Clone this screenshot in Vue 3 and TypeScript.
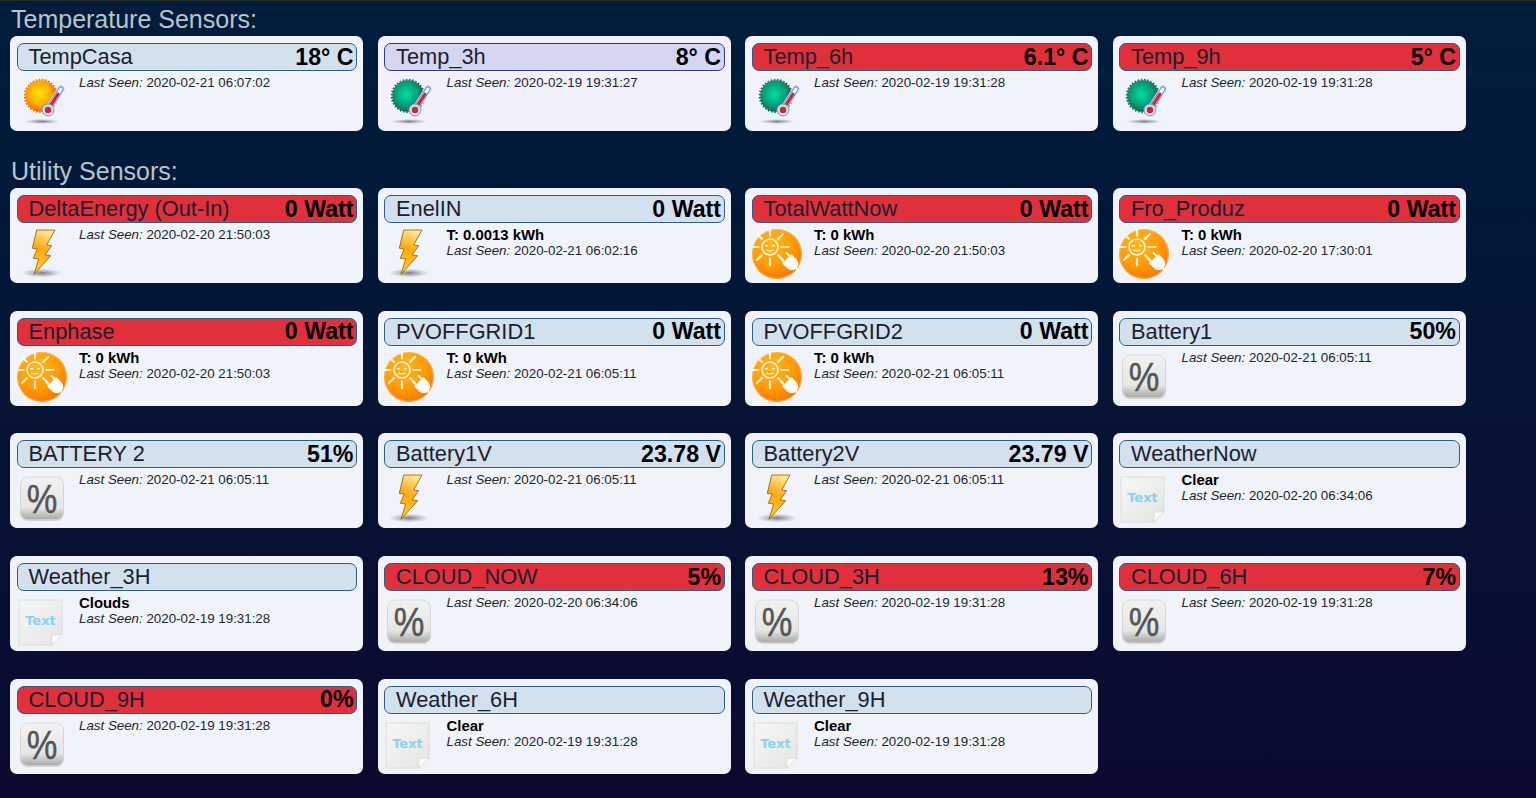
<script setup lang="ts">
type Icon = 'sun' | 'green' | 'bolt' | 'solar' | 'pct' | 'text'
type State = 'ok' | 'old' | 'off'
interface Sensor { name: string; value?: string; seen: string; state: State; icon: Icon; extra?: string }

const temperature: Sensor[] = [
  { name: 'TempCasa', value: '18° C', seen: '2020-02-21 06:07:02', state: 'ok', icon: 'sun' },
  { name: 'Temp_3h', value: '8° C', seen: '2020-02-19 19:31:27', state: 'old', icon: 'green' },
  { name: 'Temp_6h', value: '6.1° C', seen: '2020-02-19 19:31:28', state: 'off', icon: 'green' },
  { name: 'Temp_9h', value: '5° C', seen: '2020-02-19 19:31:28', state: 'off', icon: 'green' },
]
const utility: Sensor[] = [
  { name: 'DeltaEnergy (Out-In)', value: '0 Watt', seen: '2020-02-20 21:50:03', state: 'off', icon: 'bolt' },
  { name: 'EnelIN', value: '0 Watt', extra: 'T: 0.0013 kWh', seen: '2020-02-21 06:02:16', state: 'ok', icon: 'bolt' },
  { name: 'TotalWattNow', value: '0 Watt', extra: 'T: 0 kWh', seen: '2020-02-20 21:50:03', state: 'off', icon: 'solar' },
  { name: 'Fro_Produz', value: '0 Watt', extra: 'T: 0 kWh', seen: '2020-02-20 17:30:01', state: 'off', icon: 'solar' },
  { name: 'Enphase', value: '0 Watt', extra: 'T: 0 kWh', seen: '2020-02-20 21:50:03', state: 'off', icon: 'solar' },
  { name: 'PVOFFGRID1', value: '0 Watt', extra: 'T: 0 kWh', seen: '2020-02-21 06:05:11', state: 'ok', icon: 'solar' },
  { name: 'PVOFFGRID2', value: '0 Watt', extra: 'T: 0 kWh', seen: '2020-02-21 06:05:11', state: 'ok', icon: 'solar' },
  { name: 'Battery1', value: '50%', seen: '2020-02-21 06:05:11', state: 'ok', icon: 'pct' },
  { name: 'BATTERY 2', value: '51%', seen: '2020-02-21 06:05:11', state: 'ok', icon: 'pct' },
  { name: 'Battery1V', value: '23.78 V', seen: '2020-02-21 06:05:11', state: 'ok', icon: 'bolt' },
  { name: 'Battery2V', value: '23.79 V', seen: '2020-02-21 06:05:11', state: 'ok', icon: 'bolt' },
  { name: 'WeatherNow', extra: 'Clear', seen: '2020-02-20 06:34:06', state: 'ok', icon: 'text' },
  { name: 'Weather_3H', extra: 'Clouds', seen: '2020-02-19 19:31:28', state: 'ok', icon: 'text' },
  { name: 'CLOUD_NOW', value: '5%', seen: '2020-02-20 06:34:06', state: 'off', icon: 'pct' },
  { name: 'CLOUD_3H', value: '13%', seen: '2020-02-19 19:31:28', state: 'off', icon: 'pct' },
  { name: 'CLOUD_6H', value: '7%', seen: '2020-02-19 19:31:28', state: 'off', icon: 'pct' },
  { name: 'CLOUD_9H', value: '0%', seen: '2020-02-19 19:31:28', state: 'off', icon: 'pct' },
  { name: 'Weather_6H', extra: 'Clear', seen: '2020-02-19 19:31:28', state: 'ok', icon: 'text' },
  { name: 'Weather_9H', extra: 'Clear', seen: '2020-02-19 19:31:28', state: 'ok', icon: 'text' },
]
const sections = [
  { title: 'Temperature Sensors:', items: temperature },
  { title: 'Utility Sensors:', items: utility },
]
const rays = [0, 45, 90, 135, 180, 225, 270, 315]
</script>

<template>
  <div class="page">
    <svg class="defs" width="0" height="0" aria-hidden="true">
      <defs>
        <radialGradient id="gSun" cx="0.45" cy="0.42" r="0.6">
          <stop offset="0" stop-color="#ffe600" />
          <stop offset="0.6" stop-color="#ffaa00" />
          <stop offset="1" stop-color="#f4600c" />
        </radialGradient>
        <radialGradient id="gGreen" cx="0.45" cy="0.45" r="0.6">
          <stop offset="0" stop-color="#00e0a4" />
          <stop offset="0.6" stop-color="#0a9c78" />
          <stop offset="1" stop-color="#14584f" />
        </radialGradient>
        <radialGradient id="gShadow">
          <stop offset="0" stop-color="#666" stop-opacity="0.85" />
          <stop offset="1" stop-color="#888" stop-opacity="0" />
        </radialGradient>
        <linearGradient id="gBolt" x1="0.6" y1="0" x2="0.4" y2="1">
          <stop offset="0" stop-color="#ffe9a0" />
          <stop offset="0.45" stop-color="#ffa810" />
          <stop offset="1" stop-color="#ffcf30" />
        </linearGradient>
        <radialGradient id="gSolar" cx="0.4" cy="0.3" r="0.8">
          <stop offset="0" stop-color="#ffb81c" />
          <stop offset="0.55" stop-color="#ff9a06" />
          <stop offset="1" stop-color="#f26c00" />
        </radialGradient>
        <linearGradient id="gPct" x1="0" y1="0" x2="0" y2="1">
          <stop offset="0" stop-color="#f2f2f2" />
          <stop offset="0.72" stop-color="#e6e6e6" />
          <stop offset="1" stop-color="#a8a8a8" />
        </linearGradient>
        <linearGradient id="gPaper" x1="0" y1="0" x2="1" y2="1">
          <stop offset="0" stop-color="#f6f7f6" />
          <stop offset="1" stop-color="#e3e5e3" />
        </linearGradient>
      </defs>
    </svg>

    <section v-for="sec in sections" :key="sec.title" class="section">
      <h2 class="title">{{ sec.title }}</h2>
      <div class="grid">
        <article v-for="s in sec.items" :key="s.name" class="card" :class="s.state">
          <header class="bar">
            <span class="name">{{ s.name }}</span>
            <strong v-if="s.value" class="value">{{ s.value }}</strong>
          </header>
          <div class="body">
            <svg class="icon" viewBox="0 0 50 50" width="50" height="50">
              <template v-if="s.icon === 'sun' || s.icon === 'green'">
                <ellipse cx="25" cy="44.5" rx="18" ry="2.6" fill="url(#gShadow)" />
                <circle cx="24" cy="19" r="16.2" fill="none" :stroke="s.icon === 'sun' ? '#f7691a' : '#1f6a5f'" stroke-width="2" stroke-dasharray="1.6 1.6" />
                <circle cx="24" cy="19" r="15.8" :fill="s.icon === 'sun' ? 'url(#gSun)' : 'url(#gGreen)'" />
                <line x1="32" y1="31" x2="44" y2="12" stroke="#bcdcf4" stroke-width="7" stroke-linecap="round" />
                <line x1="32" y1="31" x2="44" y2="12" stroke="#4a78b8" stroke-width="5" stroke-linecap="round" />
                <line x1="32" y1="31" x2="44" y2="12" stroke="#f2f6fa" stroke-width="3.4" stroke-linecap="round" />
                <line x1="32" y1="31" x2="41" y2="17" stroke="#d8202c" stroke-width="3" stroke-linecap="round" />
                <circle cx="31" cy="33" r="6" fill="#cfdcec" stroke="#7d9cc4" stroke-width="1" />
                <circle cx="31" cy="33" r="3.2" fill="#c9283a" />
              </template>

              <template v-else-if="s.icon === 'bolt'">
                <ellipse cx="25" cy="44" rx="20" ry="4.5" fill="url(#gShadow)" />
                <polygon points="19.7,1 38,1 29.7,16 34.7,16.7 28,26 33.7,26.7 17,45.3 21.7,30 16.3,29.3 20.3,20 15.3,19.3" fill="url(#gBolt)" stroke="#9a6a14" stroke-width="0.9" stroke-linejoin="round" />
              </template>

              <template v-else-if="s.icon === 'solar'">
                <circle cx="25" cy="25" r="25" fill="url(#gSolar)" />
                <circle cx="25" cy="25" r="24.3" fill="none" stroke="#ffc66a" stroke-width="0.9" stroke-opacity="0.7" />
                <circle cx="18" cy="18" r="8" fill="none" stroke="#fff" stroke-width="1.6" stroke-opacity="0.85" />
                <rect x="13" y="16" width="3" height="1.4" fill="#fff" />
                <rect x="20" y="16" width="3" height="1.4" fill="#fff" />
                <path d="M14.5 21q3.5 1.8 7 0" fill="none" stroke="#fff" stroke-width="1.1" />
                <line v-for="a in rays" :key="a" x1="18" y1="6.5" x2="18" y2="-0.5" stroke="#fff" stroke-width="2.2" stroke-opacity="0.8" stroke-linecap="round" :transform="`rotate(${a} 18 18)`" />
                <g transform="rotate(45 39 34)" fill="#fff">
                  <path d="M33 27.5h7a6.5 6.5 0 0 1 6.5 6.5a6.5 6.5 0 0 1 -6.5 6.5h-7z" />
                  <rect x="28" y="29" width="5" height="2" />
                  <rect x="28" y="37" width="5" height="2" />
                  <rect x="46" y="33" width="5" height="2" />
                </g>
              </template>

              <template v-else-if="s.icon === 'pct'">
                <rect x="3" y="4" width="44" height="43" rx="8" fill="#999" fill-opacity="0.35" />
                <rect x="3.5" y="3" width="43" height="42.5" rx="7.5" fill="url(#gPct)" stroke="#d2d2d2" stroke-width="0.7" />
                <text transform="translate(25 39) scale(0.84 1)" text-anchor="middle" class="pct-glyph">%</text>
              </template>

              <template v-else>
                <path d="M2 3h43v35l-10 10H2z" fill="url(#gPaper)" stroke="#d8dad8" stroke-width="0.8" />
                <path d="M45 38h-10v10z" fill="#fbfbfb" stroke="#d0d2d0" stroke-width="0.6" />
                <text x="23.5" y="28" text-anchor="middle" class="text-glyph">Text</text>
              </template>
            </svg>
            <div class="info">
              <div v-if="s.extra" class="extra">{{ s.extra }}</div>
              <div class="seen"><em>Last Seen:</em> {{ s.seen }}</div>
            </div>
          </div>
        </article>
      </div>
    </section>
  </div>
</template>

<style>
html, body {
  margin: 0;
  background: #050a2c;
}
</style>

<style scoped>
.page {
  box-sizing: border-box;
  min-height: 798px;
  padding: 0 0 0 10px;
  border-top: 1px solid #2b2a22;
  background: linear-gradient(180deg, #001d3b 0%, #0b0a30 100%);
  font-family: "Liberation Sans", Arial, sans-serif;
  color: #212529;
}
.defs {
  position: absolute;
}
.section + .section {
  margin-top: 28px;
}
.section:first-of-type .title {
  padding-top: 6px;
}
.title {
  margin: 0 0 0 1px;
  height: 29px;
  line-height: 25px;
  font-size: 25px;
  font-weight: 400;
  color: #b9c4cd;
  white-space: nowrap;
}
.grid {
  display: grid;
  grid-template-columns: repeat(4, 353px);
  column-gap: 14.5px;
  row-gap: 27.7px;
}
.card {
  box-sizing: border-box;
  height: 95px;
  padding: 7px 6px 0 6.5px;
  border-radius: 7px;
  background: #f0f4fa;
}
.bar {
  box-sizing: border-box;
  display: flex;
  justify-content: space-between;
  align-items: center;
  height: 28px;
  padding: 0 2.5px 0 11px;
  border: 1px solid #2d5d88;
  border-radius: 7px;
  background: #d3e1ef;
  white-space: nowrap;
}
.old {
  background: #f1f0fb;
}
.old .bar {
  background: #d5d6f0;
  border-color: #36387f;
}
.off .bar {
  background: #e0303c;
}
.name {
  font-size: 21.8px;
  color: #1b1e2c;
}
.value {
  font-size: 23.2px;
  font-weight: 700;
  color: #000;
}
.body {
  display: flex;
  gap: 12.5px;
  margin-top: 6px;
}
.icon {
  flex: none;
  display: block;
  overflow: visible;
}
.info {
  margin-top: -2px;
  font-size: 13.33px;
  line-height: 15px;
  color: #212529;
  white-space: nowrap;
}
.extra {
  margin-top: 1px;
  font-size: 14.9px;
  font-weight: 700;
  color: #000;
}
.seen em {
  font-style: italic;
}
.pct-glyph {
  font-family: "Liberation Sans", Arial, sans-serif;
  font-size: 41px;
  fill: #555;
  stroke: #555;
  stroke-width: 0.5px;
}
.text-glyph {
  font-family: "DejaVu Sans", sans-serif;
  font-size: 13px;
  font-weight: 700;
  fill: #86d2f2;
}
</style>
